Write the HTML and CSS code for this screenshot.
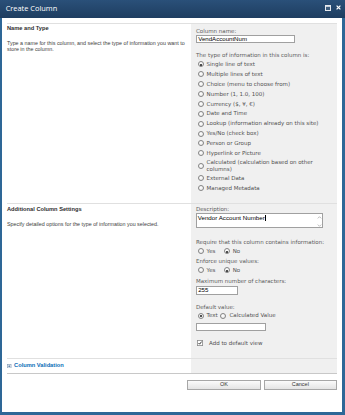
FILE: index.html
```html
<!DOCTYPE html>
<html>
<head>
<meta charset="utf-8">
<link rel="stylesheet" href="styles.css">
</head>
<body>
<div class="dialog">
  <div class="titlebar">
    <span class="title">Create Column</span>
    <span class="tb-icons">
      <svg class="ic-max" width="6" height="6" viewBox="0 0 6 6"><rect x="0.5" y="0.5" width="5" height="5" fill="#3d5d7e" stroke="#e6e9ee" stroke-width="1"/><rect x="0" y="0" width="6" height="1.8" fill="#e6e9ee"/></svg>
      <svg class="ic-close" width="5" height="5" viewBox="0 0 5 5"><path d="M0.6 0.6 L4.4 4.4 M4.4 0.6 L0.6 4.4" stroke="#ffffff" stroke-width="1.2"/></svg>
    </span>
  </div>
  <div class="frame">
    <div class="section">
      <div class="left">
        <div class="head">Name and Type</div>
        <div class="desc">Type a name for this column, and select the type of information you want to store in the column.</div>
      </div>
      <div class="right r1">
        <div class="lbl">Column name:</div>
        <div class="input w-name">VendAccountNum</div>
        <div class="lbl lbl-type">The type of information in this column is:</div>
        <div class="opts">
          <div class="opt"><span class="radio on"></span><span>Single line of text</span></div>
          <div class="opt"><span class="radio"></span><span>Multiple lines of text</span></div>
          <div class="opt"><span class="radio"></span><span>Choice (menu to choose from)</span></div>
          <div class="opt"><span class="radio"></span><span>Number (1, 1.0, 100)</span></div>
          <div class="opt"><span class="radio"></span><span>Currency ($, ¥, €)</span></div>
          <div class="opt"><span class="radio"></span><span>Date and Time</span></div>
          <div class="opt"><span class="radio"></span><span>Lookup (information already on this site)</span></div>
          <div class="opt"><span class="radio"></span><span>Yes/No (check box)</span></div>
          <div class="opt"><span class="radio"></span><span>Person or Group</span></div>
          <div class="opt"><span class="radio"></span><span>Hyperlink or Picture</span></div>
          <div class="opt two"><span class="radio"></span><span>Calculated (calculation based on other columns)</span></div>
          <div class="opt"><span class="radio"></span><span>External Data</span></div>
          <div class="opt"><span class="radio"></span><span>Managed Metadata</span></div>
        </div>
      </div>
    </div>

    <div class="section">
      <div class="left">
        <div class="head">Additional Column Settings</div>
        <div class="desc">Specify detailed options for the type of information you selected.</div>
      </div>
      <div class="right r2">
        <div class="lbl">Description:</div>
        <div class="textarea">
          <span class="ta-text">Vendor Account Number<span class="caret"></span></span>
          <svg class="ta-scroll" width="5" height="13" viewBox="0 0 5 13"><path d="M0.8 3.4 L2.5 1.7 L4.2 3.4 M0.8 9.6 L2.5 11.3 L4.2 9.6" fill="none" stroke="#a9a9a9" stroke-width="0.8"/></svg>
        </div>
        <div class="lbl lbl-req">Require that this column contains information:</div>
        <div class="pair">
          <span class="pitem"><span class="radio"></span><span>Yes</span></span>
          <span class="pitem"><span class="radio on"></span><span>No</span></span>
        </div>
        <div class="lbl lbl-uni">Enforce unique values:</div>
        <div class="pair">
          <span class="pitem"><span class="radio"></span><span>Yes</span></span>
          <span class="pitem"><span class="radio on"></span><span>No</span></span>
        </div>
        <div class="lbl lbl-max">Maximum number of characters:</div>
        <div class="input w-max">255</div>
        <div class="lbl lbl-def">Default value:</div>
        <div class="pair tight">
          <span class="pitem"><span class="radio on"></span><span>Text</span></span>
          <span class="pitem"><span class="radio"></span><span>Calculated Value</span></span>
        </div>
        <div class="input w-def"></div>
        <div class="chk-row">
          <svg class="chk" width="6" height="6" viewBox="0 0 6 6"><rect x="0.4" y="0.4" width="5.2" height="5.2" fill="#ffffff" stroke="#8a8a8a" stroke-width="0.8"/><path d="M1.5 3 L2.6 4.2 L4.6 1.6" fill="none" stroke="#222" stroke-width="0.9"/></svg>
          <span>Add to default view</span>
        </div>
      </div>
    </div>

    <div class="section val">
      <div class="left val-left">
        <svg class="exp" width="4.5" height="4.5" viewBox="0 0 5 5"><rect x="0.5" y="0.5" width="4" height="4" fill="#ffffff" stroke="#8da3bb" stroke-width="0.8"/><path d="M1.4 2.5 H3.6 M2.5 1.4 V3.6" stroke="#2c5d8f" stroke-width="0.7"/></svg>
        <span class="val-link">Column Validation</span>
      </div>
      <div class="right"></div>
    </div>

    <div class="btns">
      <button class="btn">OK</button>
      <button class="btn">Cancel</button>
    </div>
  </div>
</div>
</body>
</html>
```
FILE: styles.css
```css
html, body {
  margin: 0;
  padding: 0;
  width: 345px;
  height: 415px;
  overflow: hidden;
  background: #ffffff;
}

.dialog {
  width: 345px;
  height: 415px;
  display: flex;
  flex-direction: column;
}

.titlebar {
  height: 18px;
  flex: none;
  display: flex;
  align-items: center;
  padding: 0 4.5px 0 5.7px;
  background: linear-gradient(#2a5079, #1e3d60);
  color: #ffffff;
  font: 7.4px/1 "Open Sans", "Liberation Sans", sans-serif;
}

.title {
  padding-bottom: 0.5px;
}

.tb-icons {
  margin-left: auto;
  display: flex;
  align-items: center;
  gap: 4.7px;
  margin-top: -3px;
}

.ic-max, .ic-close {
  display: block;
}

.frame {
  flex: 1;
  border-style: solid;
  border-color: #2e6797;
  border-width: 0 3px 3px 2px;
  padding: 5px 5px 0 5px;
  background: #ffffff;
}

.section {
  display: grid;
  grid-template-columns: 184px 146px;
  border-top: 1px solid #e0e0e0;
}

.left {
  padding: 1.4px 4px 0 0;
}

.head {
  font: bold 5.7px/7px "Liberation Sans", Arial, sans-serif;
  color: #2e2e2e;
}

.desc {
  margin-top: 8px;
  font: 5.35px/6px "Liberation Sans", Arial, sans-serif;
  color: #3e3e3e;
}

.right {
  background: #f0f0f0;
  padding-left: 5px;
  font: 5.5px/7px "DejaVu Sans", Verdana, sans-serif;
  color: #505050;
}

.r1 {
  padding-top: 4.2px;
  padding-bottom: 10.4px;
}

.r2 {
  padding-top: 2.3px;
  padding-bottom: 9.5px;
}

.lbl {
  height: 7px;
  white-space: nowrap;
  color: #5c5c5c;
}

.lbl-type { margin-top: 9px; }
.lbl-req { margin-top: 11px; }
.lbl-uni { margin-top: 2px; }
.lbl-max { margin-top: 2.5px; }
.lbl-def { margin-top: 9.2px; }

.input {
  box-sizing: border-box;
  height: 8.2px;
  border: 1px solid #a0a0a0;
  background: #ffffff;
  font: 6.1px/6.2px "Liberation Sans", Arial, sans-serif;
  color: #000000;
  padding-left: 1.5px;
}

.w-name { width: 99.3px; margin-left: -0.3px; }
.w-max { width: 42.6px; margin-left: -0.3px; margin-top: 1.5px; }
.w-def { width: 70px; margin-left: -0.3px; margin-top: 1.8px; }

.opts {
  display: flex;
  flex-direction: column;
}

.opt {
  display: flex;
  align-items: center;
  min-height: 9.9px;
  line-height: 6.6px;
}

.opt.two {
  padding: 0.75px 0;
  padding-right: 8px;
}

.radio {
  flex: none;
  position: relative;
  box-sizing: border-box;
  width: 6px;
  height: 6px;
  border-radius: 50%;
  border: 0.8px solid #848484;
  background: radial-gradient(circle at 40% 35%, #ffffff, #e6e6e6);
  margin: 0 3.1px 0 1.5px;
}

.radio.on::after {
  content: "";
  position: absolute;
  left: 1.2px;
  top: 1.2px;
  width: 2.4px;
  height: 2.4px;
  border-radius: 50%;
  background: #1a1a1a;
}

.textarea {
  box-sizing: border-box;
  width: 127.6px;
  height: 15px;
  margin-left: -0.3px;
  border: 1px solid #a0a0a0;
  background: #ffffff;
  display: flex;
  justify-content: space-between;
  padding: 0.6px 0.8px 0 1px;
}

.ta-text {
  font: 6.2px/6.4px "Liberation Sans", Arial, sans-serif;
  color: #000000;
  white-space: nowrap;
}

.caret {
  display: inline-block;
  width: 0.6px;
  height: 6px;
  background: #000000;
  vertical-align: -1px;
  margin-left: 0.4px;
}

.ta-scroll {
  display: block;
  flex: none;
}

.pair {
  display: flex;
  align-items: center;
  height: 10px;
  gap: 6.6px;
}

.pair.tight {
  gap: 1.2px;
}

.pitem {
  display: flex;
  align-items: center;
}

.chk-row {
  display: flex;
  align-items: center;
  height: 10px;
  margin-top: 7.5px;
}

.chk {
  display: block;
  flex: none;
  margin: 0 5.7px 0 1.3px;
}

.val {
  border-bottom: 1px solid #c8c8c8;
}

.val-left {
  height: 14px;
  padding: 0;
  display: flex;
  align-items: center;
  gap: 2.3px;
}

.exp {
  display: block;
  flex: none;
  margin-left: 0.3px;
}

.val-link {
  font: bold 5.7px/7px "Liberation Sans", Arial, sans-serif;
  color: #0a6cb6;
}

.btns {
  display: flex;
  justify-content: flex-end;
  gap: 3px;
  margin-top: 6px;
}

.btn {
  box-sizing: border-box;
  width: 73.3px;
  height: 10px;
  padding: 0;
  margin: 0;
  border: 1px solid #a7a7a7;
  border-radius: 0;
  background: linear-gradient(#fbfbfb, #e4e4e4);
  font: 5.5px/1 "Liberation Sans", Arial, sans-serif;
  color: #333333;
}
```
